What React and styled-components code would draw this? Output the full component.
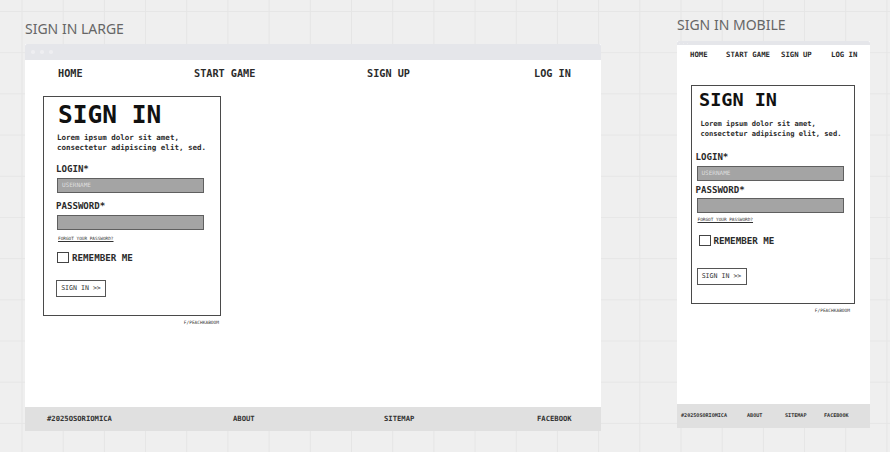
import React from "react";
import styled, { createGlobalStyle } from "styled-components";

const Global = createGlobalStyle`
  html, body { margin: 0; padding: 0; background: #efefef; }
  * { box-sizing: border-box; }
`;

const mono = `"DejaVu Sans Mono", "Liberation Mono", monospace`;

const Board = styled.div`
  width: 890px;
  height: 452px;
  overflow: hidden;
  display: flex;
  align-items: flex-start;
  background-color: #efefef;
  background-image:
    linear-gradient(to right, #e5e5e5 1px, transparent 1px),
    linear-gradient(to bottom, #e6e6e6 1px, transparent 1px);
  background-size: 41.2px 41.2px;
  background-position: 21.5px 11px;
  padding-left: 25px;
`;

const Column = styled.section`
  display: flex;
  flex-direction: column;
  width: ${(p) => p.$width}px;
  margin-right: ${(p) => p.$gap || 0}px;
  padding-top: ${(p) => p.$top}px;
`;

const Heading = styled.h2`
  margin: 0;
  height: ${(p) => p.$height}px;
  font: 400 14px/20px "Noto Sans", "Open Sans", sans-serif;
  color: #666;
  white-space: nowrap;
`;

const Frame = styled.div`
  background: #fff;
  height: ${(p) => p.$height}px;
  display: flex;
  flex-direction: column;
`;

const TitleBar = styled.div`
  height: ${(p) => p.$height}px;
  flex: none;
  background: #e5e6ea;
  display: flex;
  align-items: center;
  gap: ${(p) => p.$dot + 2}px;
  padding-left: ${(p) => p.$inset}px;
  border-radius: 2px 2px 0 0;
`;

const Dot = styled.span`
  width: ${(p) => p.$dot}px;
  height: ${(p) => p.$dot}px;
  border-radius: 50%;
  background: #eeeef1;
`;

const Nav = styled.nav`
  display: grid;
  grid-template-columns: ${(p) => p.$cols};
  padding-left: ${(p) => p.$inset}px;
  padding-top: ${(p) => p.$top}px;
  height: ${(p) => p.$height}px;
  flex: none;
  font: 700 ${(p) => p.$size}px/1.2 ${mono};
  color: #2b2b2b;
  white-space: nowrap;
`;

const Main = styled.main`
  flex: 1;
  padding-left: ${(p) => p.$inset}px;
`;

const Card = styled.div`
  width: ${(p) => p.$width}px;
  height: ${(p) => p.$height}px;
  border: 1.5px solid #4a4a4a;
  padding-left: ${(p) => p.$pad}px;
  color: #1c1c1c;
  font-family: ${mono};
`;

const Title = styled.h1`
  margin: ${(p) => p.$top}px 0 0 ${(p) => p.$inset}px;
  font: 700 ${(p) => p.$size}px/1 ${mono};
  color: #111;
  white-space: nowrap;
`;

const Intro = styled.p`
  margin: ${(p) => p.$top}px 0 0 ${(p) => p.$inset}px;
  font: 700 ${(p) => p.$size}px/${(p) => p.$line}px ${mono};
  color: #2b2b2b;
  white-space: nowrap;
`;

const Label = styled.div`
  margin-top: ${(p) => p.$top}px;
  font: 700 9.1px/11px ${mono};
  color: #2b2b2b;
`;

const Field = styled.div`
  width: 147px;
  height: 15px;
  margin: ${(p) => p.$top}px 0 0 1px;
  background: #a4a4a4;
  border: 1.5px solid #5f5f5f;
  padding-left: 4px;
  font: 400 6px/12px ${mono};
  color: #dedede;
`;

const Forgot = styled.a`
  display: block;
  margin: ${(p) => p.$top}px 0 0 2px;
  font: 400 4.4px/6px ${mono};
  color: #333;
  text-decoration: underline;
  white-space: nowrap;
`;

const Remember = styled.label`
  display: flex;
  align-items: center;
  gap: 3px;
  margin: ${(p) => p.$top}px 0 0 ${(p) => p.$inset}px;
  font: 700 9.2px/12px ${mono};
  color: #2b2b2b;
`;

const Box = styled.span`
  width: 12px;
  height: 11px;
  border: 1.5px solid #444;
  background: #fff;
`;

const Button = styled.button`
  display: block;
  width: 50px;
  height: 17px;
  margin: ${(p) => p.$top}px 0 0 ${(p) => p.$inset || 0}px;
  padding: 0;
  background: #fff;
  border: 1px solid #555;
  font: 400 6.6px/1 ${mono};
  color: #333;
`;

const Credit = styled.div`
  width: ${(p) => p.$width}px;
  margin-top: 4px;
  text-align: right;
  font: 400 4.5px/6px ${mono};
  color: #333;
`;

const Foot = styled.footer`
  display: grid;
  grid-template-columns: ${(p) => p.$cols};
  align-items: center;
  height: 24px;
  flex: none;
  padding-left: ${(p) => p.$inset}px;
  background: #e0e0e0;
  font: 700 ${(p) => p.$size}px/1 ${mono};
  color: #333;
  white-space: nowrap;
`;

const Dots = ({ dot }) => (
  <>
    <Dot $dot={dot} />
    <Dot $dot={dot} />
    <Dot $dot={dot} />
  </>
);

const navItems = ["HOME", "START GAME", "SIGN UP", "LOG IN"];
const footItems = ["#2025OSORIOMICA", "ABOUT", "SITEMAP", "FACEBOOK"];

export default function App() {
  return (
    <>
      <Global />
      <Board>
        <Column $width={576} $gap={76} $top={19}>
          <Heading $height={25}>SIGN IN LARGE</Heading>
          <Frame $height={387}>
            <TitleBar $height={16} $dot={3.5} $inset={6}>
              <Dots dot={3.5} />
            </TitleBar>
            <Nav $cols="136px 173px 167px auto" $inset={33} $top={8} $height={36} $size={10.2}>
              {navItems.map((t) => (
                <span key={t}>{t}</span>
              ))}
            </Nav>
            <Main $inset={18}>
              <Card $width={178} $height={220} $pad={12}>
                <Title $top={6} $inset={2} $size={24.5}>SIGN IN</Title>
                <Intro $top={5} $inset={1} $size={7.5} $line={10.5}>
                  Lorem ipsum dolor sit amet,
                  <br />
                  consectetur adipiscing elit, sed.
                </Intro>
                <Label $top={10}>LOGIN*</Label>
                <Field $top={3}>USERNAME</Field>
                <Label $top={8}>PASSWORD*</Label>
                <Field $top={3} />
                <Forgot $top={6}>FORGOT YOUR PASSWORD?</Forgot>
                <Remember $top={10} $inset={1}>
                  <Box />
                  REMEMBER ME
                </Remember>
                <Button $top={16}>SIGN IN &gt;&gt;</Button>
              </Card>
              <Credit $width={176}>F/PEACHKABOOM</Credit>
            </Main>
            <Foot $cols="186px 151px 153px auto" $inset={22} $size={7.2}>
              {footItems.map((t) => (
                <span key={t}>{t}</span>
              ))}
            </Foot>
          </Frame>
        </Column>
        <Column $width={193} $top={15}>
          <Heading $height={26}>SIGN IN MOBILE</Heading>
          <Frame $height={387}>
            <TitleBar $height={4} $dot={1} $inset={2}>
              <Dots dot={1} />
            </TitleBar>
            <Nav $cols="36px 55px 50px auto" $inset={13} $top={6} $height={40} $size={7.3}>
              {navItems.map((t) => (
                <span key={t}>{t}</span>
              ))}
            </Nav>
            <Main $inset={14}>
              <Card $width={164} $height={219} $pad={3.5}>
                <Title $top={5} $inset={3.5} $size={18.5}>SIGN IN</Title>
                <Intro $top={9} $inset={5} $size={7.1} $line={10}>
                  Lorem ipsum dolor sit amet,
                  <br />
                  consectetur adipiscing elit, sed.
                </Intro>
                <Label $top={13}>LOGIN*</Label>
                <Field $top={3}>USERNAME</Field>
                <Label $top={4}>PASSWORD*</Label>
                <Field $top={2} />
                <Forgot $top={4}>FORGOT YOUR PASSWORD?</Forgot>
                <Remember $top={12} $inset={3}>
                  <Box />
                  REMEMBER ME
                </Remember>
                <Button $top={21} $inset={1}>SIGN IN &gt;&gt;</Button>
              </Card>
              <Credit $width={159}>F/PEACHKABOOM</Credit>
            </Main>
            <Foot $cols="66px 38px 39px auto" $inset={4} $size={5.1}>
              {footItems.map((t) => (
                <span key={t}>{t}</span>
              ))}
            </Foot>
          </Frame>
        </Column>
      </Board>
    </>
  );
}
